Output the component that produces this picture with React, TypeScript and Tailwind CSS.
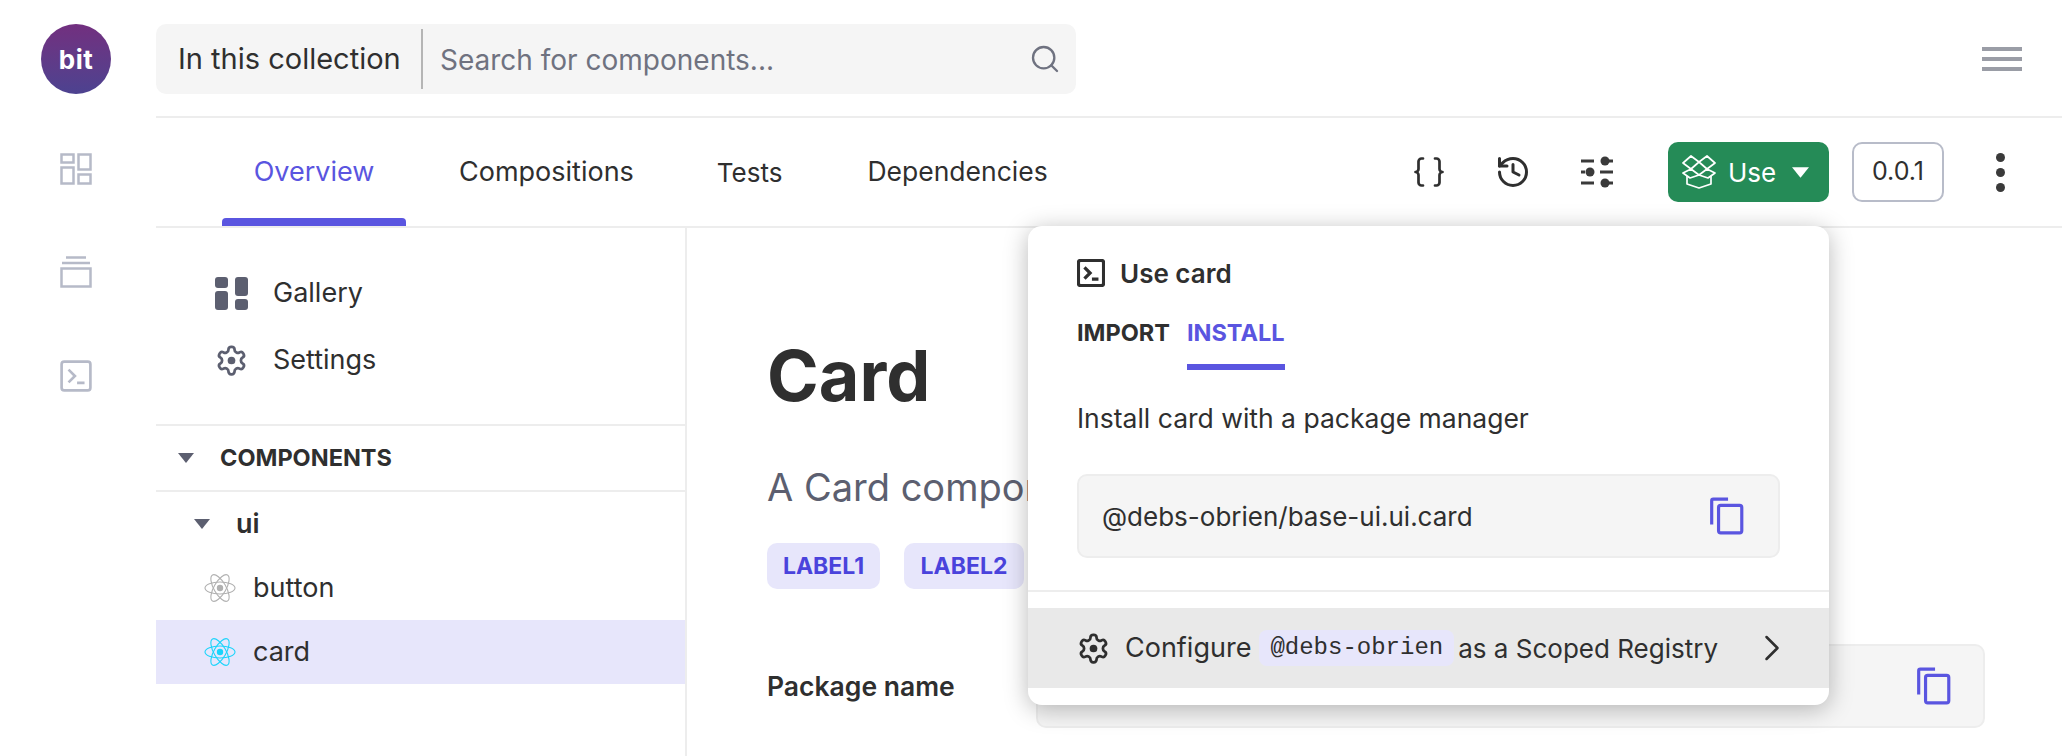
import { Braces, ChevronRight, History, Search } from "lucide-react";

const gearPath =
  "M12.22 2h-.44a2 2 0 0 0-2 2v.18a2 2 0 0 1-1 1.73l-.43.25a2 2 0 0 1-2 0l-.15-.08a2 2 0 0 0-2.73.73l-.22.38a2 2 0 0 0 .73 2.73l.15.1a2 2 0 0 1 1 1.72v.51a2 2 0 0 1-1 1.74l-.15.09a2 2 0 0 0-.73 2.73l.22.38a2 2 0 0 0 2.73.73l.15-.08a2 2 0 0 1 2 0l.43.25a2 2 0 0 1 1 1.73V20a2 2 0 0 0 2 2h.44a2 2 0 0 0 2-2v-.18a2 2 0 0 1 1-1.73l.43-.25a2 2 0 0 1 2 0l.15.08a2 2 0 0 0 2.73-.73l.22-.39a2 2 0 0 0-.73-2.73l-.15-.08a2 2 0 0 1-1-1.74v-.5a2 2 0 0 1 1-1.74l.15-.09a2 2 0 0 0 .73-2.73l-.22-.38a2 2 0 0 0-2.73-.73l-.15.08a2 2 0 0 1-2 0l-.43-.25a2 2 0 0 1-1-1.73V4a2 2 0 0 0-2-2z";

function Gear({ className }: { className: string }) {
  return (
    <svg viewBox="0 0 24 24" fill="none" stroke="currentColor" strokeWidth="2" className={className}>
      <path d={gearPath} />
      <circle cx="12" cy="12" r="2.8" fill="currentColor" stroke="none" />
    </svg>
  );
}

function CopyIcon({ className }: { className: string }) {
  return (
    <svg viewBox="0 0 32 36" fill="none" stroke="#5a55e0" strokeWidth="3" className={className}>
      <path d="M17 2H3a1.5 1.5 0 0 0-1.5 1.5V26" />
      <rect x="8" y="8" width="22" height="26" rx="2" />
    </svg>
  );
}

function ReactLogo({ color }: { color: string }) {
  return (
    <svg viewBox="0 0 32 32" fill="none" stroke={color} strokeWidth="1.1" className="w-8 h-8 shrink-0">
      <ellipse cx="16" cy="16" rx="15" ry="6" />
      <ellipse cx="16" cy="16" rx="15" ry="6" transform="rotate(60 16 16)" />
      <ellipse cx="16" cy="16" rx="15" ry="6" transform="rotate(120 16 16)" />
      <circle cx="16" cy="16" r="3.2" fill={color} stroke="none" />
    </svg>
  );
}

function TerminalIcon({ className, sw }: { className: string; sw: number }) {
  return (
    <svg viewBox="0 0 30 30" fill="none" stroke="currentColor" strokeWidth={sw} className={className}>
      <rect x="1.5" y="1.5" width="27" height="27" rx="2.5" />
      <path d="M8 9l6 6-6 6M16 21.5h7" />
    </svg>
  );
}

function Caret({ className }: { className: string }) {
  return (
    <svg viewBox="0 0 16 10" className={className}>
      <path d="M0 0h16L8 10z" fill="currentColor" />
    </svg>
  );
}

function Rail() {
  return (
    <aside className="w-[156px] shrink-0 flex flex-col items-center pt-6 pr-[4px] text-[#b6bac8]">
      <div className="w-[70px] h-[70px] rounded-full bg-gradient-to-b from-[#722f7f] to-[#4c4290] flex items-center justify-center text-white text-[26px] font-bold tracking-[0.5px]">
        bit
      </div>
      <svg viewBox="0 0 32 32" fill="none" stroke="currentColor" strokeWidth="2.5" className="w-8 h-8 mt-[59px]">
        <rect x="1.500" y="1.500" width="12" height="8" />
        <rect x="18.500" y="1.500" width="12" height="15" />
        <rect x="1.500" y="14.500" width="12" height="16" />
        <rect x="18.500" y="21.500" width="12" height="9" />
      </svg>
      <svg viewBox="0 0 32 32" fill="none" stroke="currentColor" strokeWidth="2.5" className="w-8 h-8 mt-[71px]">
        <path d="M6 1.500h20M2 7h28" />
        <rect x="1.500" y="12.500" width="29" height="18" />
      </svg>
      <div className="mt-[72px]">
        <TerminalIcon className="w-8 h-8" sw={2.5} />
      </div>
    </aside>
  );
}

function Tabs() {
  return (
    <div className="h-[110px] flex items-center border-b-2 border-[#ededed] pl-[66px] pr-[57px] text-[27px] text-[#2f2f2f]">
      <div className="relative w-[184px] h-full flex items-center justify-center text-[#5a55e0]">
        Overview
        <span className="absolute left-0 right-0 bottom-0 h-2 rounded-t-[4px] bg-[#5a55e0]" />
      </div>
      <span className="ml-[53px]">Compositions</span>
      <span className="ml-[83px] text-[26px]">Tests</span>
      <span className="ml-[85px] text-[26.500px]">Dependencies</span>
      <div className="ml-auto flex items-center">
        <Braces className="w-9 h-9" strokeWidth={1.8} />
        <History className="w-9 h-9 ml-[48px]" strokeWidth={2} />
        <svg viewBox="0 0 32 32" fill="none" stroke="#3a3a3a" strokeWidth="3" className="w-8 h-8 ml-[50px]">
          <path d="M0 5h13M24 5h8M0 16h4M19 16h13M0 27h13M24 27h8" />
          <circle cx="24" cy="5" r="4.500" fill="#3a3a3a" stroke="none" />
          <circle cx="9" cy="16" r="4.500" fill="#3a3a3a" stroke="none" />
          <circle cx="24" cy="27" r="4.500" fill="#3a3a3a" stroke="none" />
        </svg>
        <div className="ml-[55px] w-[161px] h-[60px] rounded-[10px] bg-[#258b57] text-white flex items-center pl-[14px]">
          <svg viewBox="0 0 34 34" fill="none" stroke="white" strokeWidth="1.7" strokeLinejoin="round" className="w-[34px] h-[34px] shrink-0">
            <path d="M17 7L9 1 1 8l8 6zM17 7l8-6 8 7-8 6zM17 7l8 7-8 6-8-6zM9 14l-8 4 7 5 9-3 9 3 7-5-8-4" />
            <path d="M5 21v8l12 4 12-4v-8" />
          </svg>
          <span className="ml-[12px] text-[26px]">Use</span>
          <Caret className="w-[17px] h-[11px] ml-[16px] text-white" />
        </div>
        <div className="ml-[23px] w-[92px] h-[60px] rounded-[10px] border-2 border-[#b8bcc9] flex items-center justify-center text-[25px]">
          0.0.1
        </div>
        <div className="ml-[52px] w-2 flex flex-col gap-[6px] mr-[1px]">
          <span className="w-[9px] h-[9px] rounded-full bg-[#3a3a3a]" />
          <span className="w-[9px] h-[9px] rounded-full bg-[#3a3a3a]" />
          <span className="w-[9px] h-[9px] rounded-full bg-[#3a3a3a]" />
        </div>
      </div>
    </div>
  );
}

function Sidebar() {
  return (
    <nav className="w-[531px] shrink-0 border-r-2 border-[#ededed] text-[27px] text-[#2f2f2f]">
      <div className="pt-[49px] pb-[48px] pl-[59px] flex flex-col gap-[35px]">
        <div className="h-8 flex items-center gap-[25px]">
          <svg viewBox="0 0 33 33" fill="#5c5f70" className="w-[33px] h-[33px]">
            <rect x="0" y="0" width="13" height="11" rx="3" />
            <rect x="20" y="0" width="13" height="19" rx="3" />
            <rect x="0" y="14" width="13" height="19" rx="3" />
            <rect x="20" y="22" width="13" height="11" rx="3" />
          </svg>
          Gallery
        </div>
        <div className="h-8 flex items-center gap-[25px]">
          <Gear className="w-[33px] h-[33px] text-[#5c5f70]" />
          Settings
        </div>
      </div>
      <div className="h-[68px] border-y-2 border-[#ededed] flex items-center pl-[22px] gap-[26px] text-[23.500px] font-bold">
        <Caret className="w-4 h-[10px] text-[#5c5f70]" />
        COMPONENTS
      </div>
      <div className="h-[64px] flex items-center pl-[38px] gap-[26px] font-semibold">
        <Caret className="w-4 h-[10px] text-[#5c5f70]" />
        ui
      </div>
      <div className="h-[64px] flex items-center pl-[48px] gap-[17px]">
        <ReactLogo color="#b0b0b0" />
        button
      </div>
      <div className="h-[64px] bg-[#e7e6fb] flex items-center pl-[48px] gap-[17px]">
        <ReactLogo color="#1ad4fb" />
        card
      </div>
    </nav>
  );
}

function Overview() {
  return (
    <main className="flex-1 pl-[80px] pr-[77px] pt-[106px]">
      <h1 className="text-[70px] leading-[84px] font-bold text-[#2f2f2f]">Card</h1>
      <p className="mt-[44px] text-[38px] leading-[50px] text-[#5c5f70] whitespace-nowrap">A Card component</p>
      <div className="mt-[31px] flex gap-6">
        <span className="h-[46px] w-[113px] rounded-[10px] bg-[#e7e6fb] text-[#4a43dc] text-[23px] font-bold flex items-center justify-center">
          LABEL1
        </span>
        <span className="h-[46px] w-[120px] rounded-[10px] bg-[#e7e6fb] text-[#4a43dc] text-[23px] font-bold flex items-center justify-center">
          LABEL2
        </span>
      </div>
      <div className="mt-[55px] flex items-center">
        <span className="w-[269px] pt-[2px] text-[26.500px] font-semibold text-[#2f2f2f]">Package name</span>
        <div className="flex-1 h-[84px] rounded-[10px] bg-[#f5f5f5] border-2 border-[#ededed] flex items-center justify-end pr-[32px]">
          <CopyIcon className="w-[34px] h-[38px]" />
        </div>
      </div>
    </main>
  );
}

function UsePopup() {
  return (
    <div className="absolute left-[1028px] top-[226px] w-[801px] h-[479px] bg-white rounded-[14px] shadow-[0_4px_24px_rgba(0,0,0,0.28)] text-[#2f2f2f] pt-[32px]">
      <div className="px-[49px] h-[30px] flex items-center gap-[15px] text-[26px] font-semibold">
        <TerminalIcon className="w-[28px] h-[28px]" sw={3.500} />
        Use card
      </div>
      <div className="mt-[27px] px-[49px] flex gap-[17px] text-[23.500px] font-bold">
        <span className="h-[55px]">IMPORT</span>
        <span className="h-[55px] border-b-[6px] border-[#5a55e0] text-[#5a55e0]">INSTALL</span>
      </div>
      <p className="mt-[30px] px-[49px] text-[26.500px] leading-[36px]">Install card with a package manager</p>
      <div className="mx-[49px] mt-[38px] h-[84px] rounded-[10px] bg-[#f5f5f5] border-2 border-[#ededed] flex items-center justify-between pl-[23px] pr-[34px] text-[26px]">
        @debs-obrien/base-ui.ui.card
        <CopyIcon className="w-[34px] h-[38px]" />
      </div>
      <div className="mt-[32px] border-t-2 border-[#ededed]" />
      <div className="mt-[16px] h-[80px] bg-[#e9e9e9] flex items-center pl-[49px] text-[26px] whitespace-nowrap">
        <Gear className="w-[33px] h-[33px]" />
        <span className="ml-[15px] text-[27px]">Configure</span>
        <code className="ml-[8px] h-[36px] px-[11px] rounded-[8px] bg-[#e7e6fb] flex items-center text-[24px] font-['Liberation_Mono',monospace]">
          @debs-obrien
        </code>
        <span className="ml-[4px]">as a Scoped Registry</span>
        <ChevronRight className="absolute right-[35px] w-11 h-11" strokeWidth={1.4} />
      </div>
    </div>
  );
}

export default function App() {
  return (
    <div className="relative h-[756px] w-[2062px] overflow-hidden bg-white flex font-['Inter',sans-serif]">
      <Rail />
      <div className="flex-1 min-w-0 flex flex-col">
        <header className="h-[118px] shrink-0 border-b-2 border-[#ededed] flex items-start pt-6 pr-[40px] justify-between">
          <div className="w-[920px] h-[70px] rounded-[10px] bg-[#f5f5f5] flex items-center text-[28px] pl-[22px] pr-[15px]">
            <span className="w-[243px] text-[29px] text-[#2f2f2f] whitespace-nowrap">In this collection</span>
            <div className="w-[2px] h-[60px] bg-[#b5b5b5]" />
            <span className="ml-[17px] pt-[2px] text-[#6f7280]">Search for components...</span>
            <Search className="ml-auto w-8 h-8 text-[#6f7280]" strokeWidth={1.75} />
          </div>
          <div className="mt-[23px] w-10 flex flex-col gap-[6px]">
            <span className="h-1 bg-[#9a9da6]" />
            <span className="h-1 bg-[#9a9da6]" />
            <span className="h-1 bg-[#9a9da6]" />
          </div>
        </header>
        <Tabs />
        <div className="flex-1 flex min-h-0">
          <Sidebar />
          <Overview />
        </div>
      </div>
      <UsePopup />
    </div>
  );
}
